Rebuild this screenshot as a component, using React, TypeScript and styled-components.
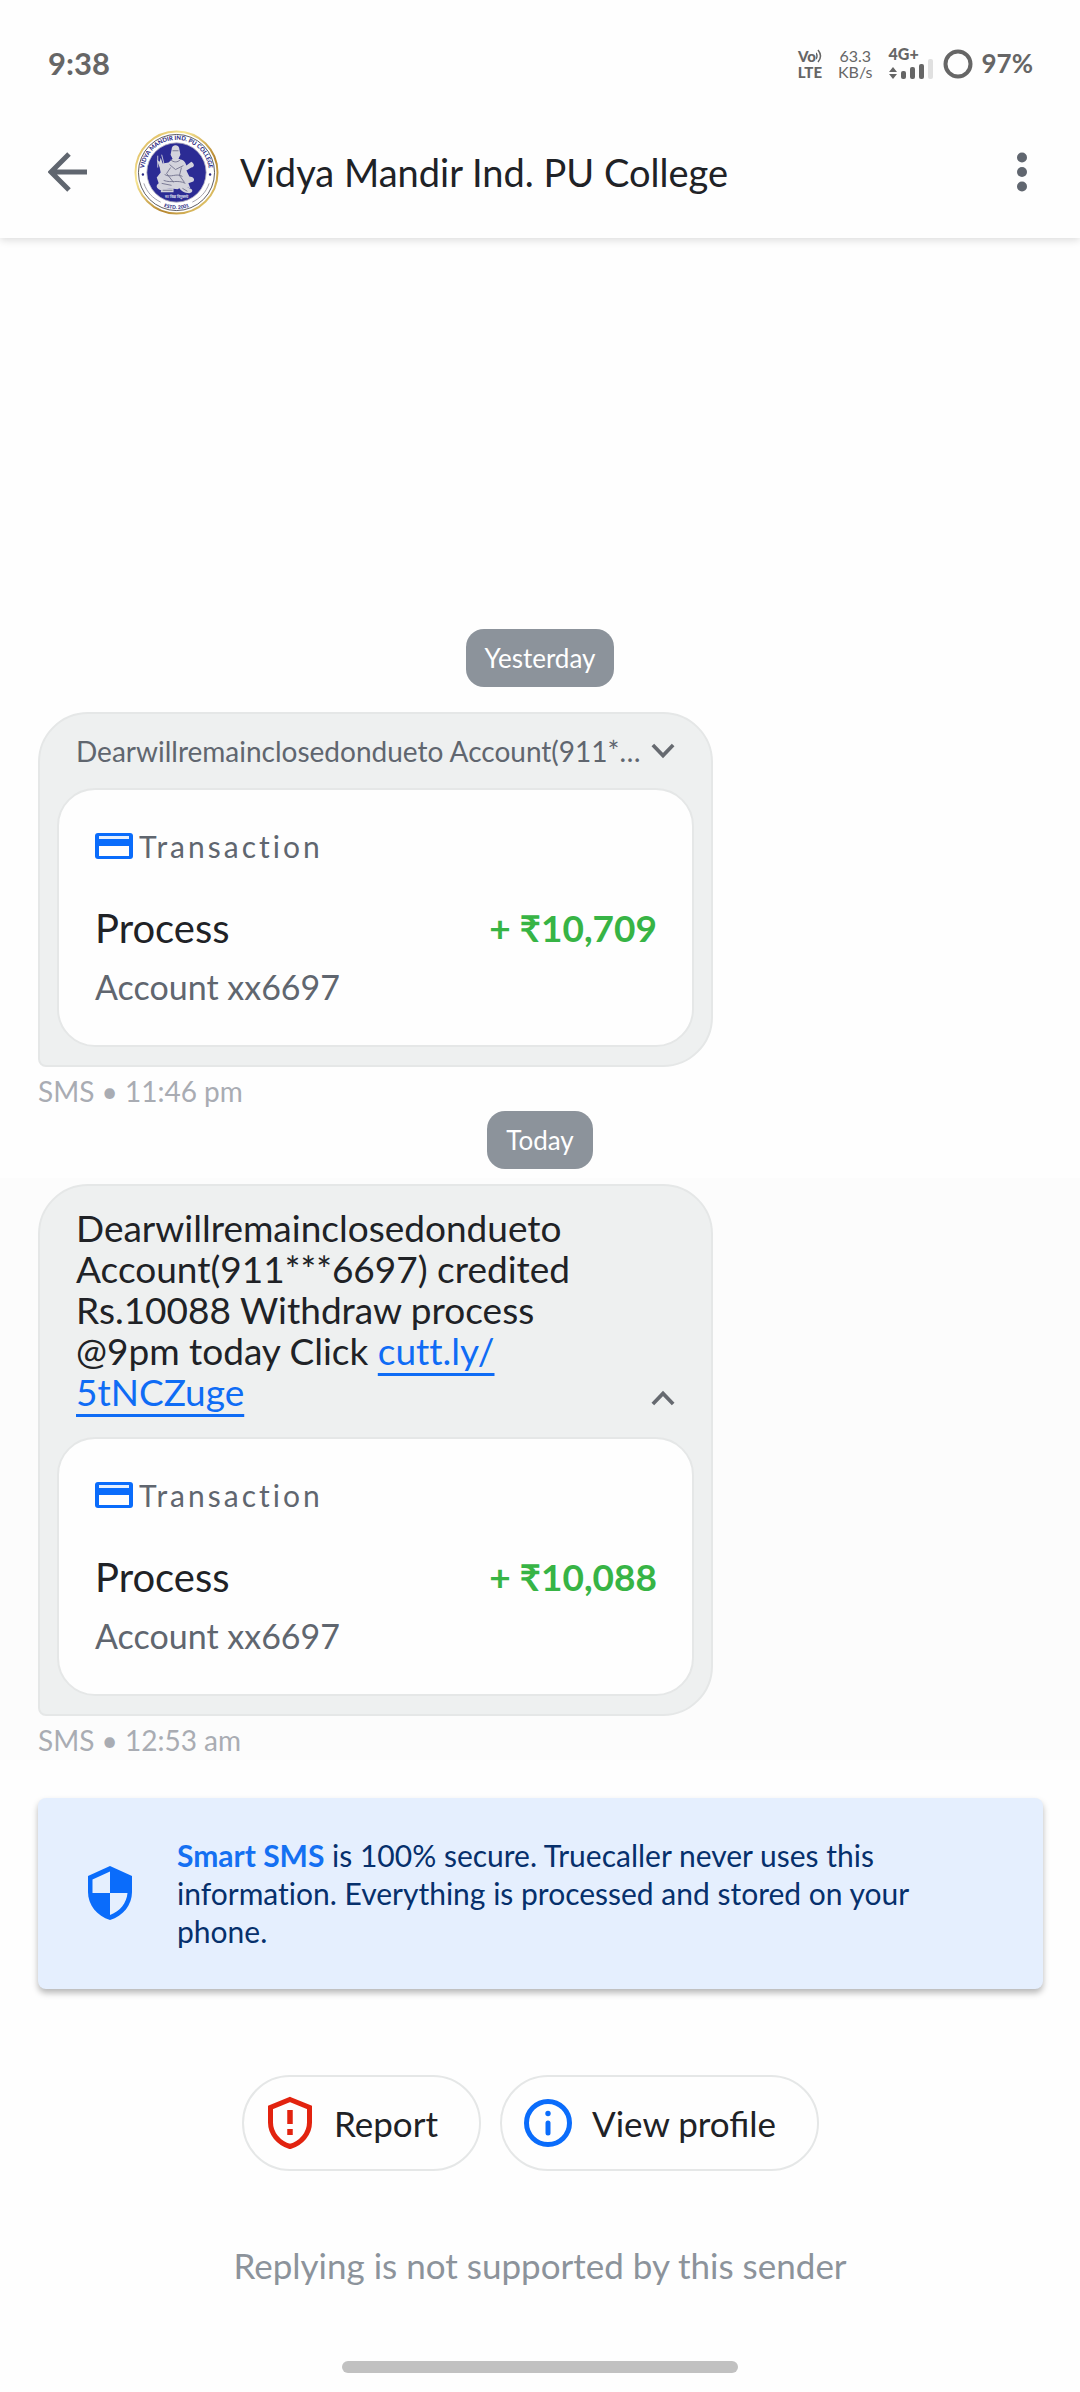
import React, { useState } from "react";
import styled, { createGlobalStyle } from "styled-components";

const GlobalStyle = createGlobalStyle`
  * { box-sizing: border-box; }
  body {
    margin: 0;
    background: #fefefe;
    font-family: Lato, "Open Sans", sans-serif;
    font-variant-ligatures: none;
    color: #202226;
  }
  button { font-family: inherit; color: inherit; background: none; border: 0; padding: 0; cursor: pointer; }
  p, h1, h2 { margin: 0; font-weight: 400; }
  svg { display: block; flex: none; }
`;

const Screen = styled.div`
  display: flex;
  flex-direction: column;
  min-height: 100vh;
  background: #fefefe;
`;

const Header = styled.header`
  padding: 40px 47px 22px 48px;
  box-shadow: 0 2px 8px rgba(0, 0, 0, 0.14);
`;

const StatusBar = styled.div`
  display: flex;
  align-items: center;
  justify-content: space-between;
  height: 48px;
  color: #666;
`;

const Clock = styled.span`
  font-size: 31px;
  line-height: 44px;
  padding-bottom: 2px;
  font-weight: 700;
`;

const StatusIcons = styled.div`
  display: flex;
  align-items: center;
`;

const Stack = styled.div<{ $bold?: boolean }>`
  display: flex;
  flex-direction: column;
  align-items: center;
  margin-right: 16px;
  font-size: ${(p) => (p.$bold ? "15px" : "16px")};
  line-height: 16px;
  font-weight: ${(p) => (p.$bold ? 900 : 400)};
`;

const VoRow = styled.span`
  display: flex;
  align-items: center;
`;

const Network = styled.div`
  display: flex;
  flex-direction: column;
  margin-right: 10px;
  font-size: 16px;
  line-height: 10px;
  font-weight: 900;
`;

const Battery = styled.span`
  margin-left: 9px;
  font-size: 26px;
  line-height: 44px;
  padding-bottom: 2px;
  font-weight: 700;
`;

const TitleBar = styled.div`
  display: flex;
  align-items: center;
  height: 128px;
  padding-top: 40px;
`;

const IconButton = styled.button<{ $end?: boolean }>`
  display: flex;
  align-items: center;
  height: 48px;
  margin-left: ${(p) => (p.$end ? "auto" : "0")};
`;

const Avatar = styled.div`
  margin: 0 21px 0 46px;
`;

const Title = styled.h1`
  font-size: 38px;
  line-height: 48px;
`;

const Thread = styled.main`
  flex: 1;
  display: flex;
  flex-direction: column;
  justify-content: flex-end;
`;

const DayChip = styled.span`
  align-self: center;
  padding: 0 19px;
  border-radius: 18px;
  background: #8c939b;
  color: #fff;
  font-size: 26px;
  line-height: 58px;
`;

const Entry = styled.article<{ $latest?: boolean }>`
  margin-top: ${(p) => (p.$latest ? "9px" : "19px")};
  padding: 6px 38px 0;
  background: ${(p) => (p.$latest ? "#fcfcfc" : "transparent")};
`;

const Bubble = styled.div`
  width: 100%;
  max-width: 675px;
  padding: 0 17px 18px;
  border: 2px solid #e5e7e7;
  border-radius: 50px 50px 50px 8px;
  background: #eef0f0;
`;

const Preview = styled.div`
  display: flex;
  align-items: center;
  justify-content: space-between;
  gap: 8px;
  height: 74px;
  padding: 0 19px;
  color: #60666f;
`;

const PreviewText = styled.p`
  overflow: hidden;
  text-overflow: ellipsis;
  white-space: nowrap;
  font-size: 28px;
  line-height: 40px;
`;

const FullMessage = styled.div`
  display: flex;
  align-items: flex-end;
  justify-content: space-between;
  padding: 21px 19px 25px;
`;

const MessageText = styled.p`
  font-size: 37px;
  line-height: 41px;
`;

const MessageLink = styled.a`
  color: #0f6cf5;
  text-decoration: underline;
  text-decoration-thickness: 3px;
  text-underline-offset: 8px;
  text-decoration-skip-ink: none;
`;

const Toggle = styled.button`
  display: flex;
  align-items: center;
  justify-content: center;
  height: 28px;
`;

const Card = styled.section`
  padding: 39px 35px 38px 36px;
  border: 2px solid #e5e7e7;
  border-radius: 38px;
  background: #fefefe;
`;

const CardKind = styled.div`
  display: flex;
  align-items: center;
  gap: 6px;
  margin-bottom: 43px;
  font-size: 30px;
  line-height: 34px;
  letter-spacing: 3px;
  color: #60666f;
`;

const CardRow = styled.div`
  display: flex;
  align-items: center;
  justify-content: space-between;
  line-height: 44px;
`;

const CardTitle = styled.h2`
  font-size: 40px;
`;

const Amount = styled.strong`
  font-size: 37px;
  font-weight: 700;
  color: #37b445;
`;

const Account = styled.p`
  margin-top: 17px;
  font-size: 34px;
  line-height: 40px;
  color: #60666f;
`;

const Meta = styled.p`
  padding-top: 4px;
  font-size: 28px;
  line-height: 40px;
  color: #a9acb3;
`;

const Banner = styled.aside`
  display: flex;
  align-items: center;
  gap: 45px;
  margin: 38px 37px 0 38px;
  padding: 38px 50px 39px;
  border-radius: 8px;
  background: #e5effe;
  box-shadow: 0 4px 6px rgba(0, 0, 0, 0.28);
  color: #06306c;
  font-size: 30px;
  line-height: 38px;
`;

const Brand = styled.strong`
  font-weight: 700;
  color: #1470f2;
`;

const Actions = styled.div`
  display: flex;
  justify-content: center;
  gap: 19px;
  margin: 86px 19px 70px 0;
`;

const Pill = styled.button`
  display: flex;
  align-items: center;
  gap: 20px;
  height: 96px;
  padding: 0 41px 0 22px;
  border: 2px solid #e5e7e7;
  border-radius: 48px;
  font-size: 35px;
`;

const Notice = styled.p`
  text-align: center;
  font-size: 35px;
  line-height: 48px;
  color: #8c939b;
`;

const HomeBar = styled.div`
  align-self: center;
  width: 37%;
  max-width: 396px;
  height: 12px;
  margin: 72px 0 19px;
  border-radius: 6px;
  background: #c1c1c1;
`;

const Chevron = ({ up }: { up?: boolean }) => (
  <svg width="24" height="18" viewBox="0 0 26 18" fill="none" stroke="#666a70" strokeWidth="4">
    <path d={up ? "M2 15.500 13 4l11 11.500" : "M2 2.500 13 14 24 2.500"} />
  </svg>
);

const Crest = () => (
  <svg width="85" height="85" viewBox="0 0 86 86" role="img" aria-label="College crest">
    <defs>
      <linearGradient id="gold" x1="0" y1="0" x2="1" y2="1">
        <stop offset="0" stopColor="#cfa347" />
        <stop offset="0.3" stopColor="#f8e795" />
        <stop offset="0.65" stopColor="#b5842c" />
        <stop offset="1" stopColor="#f6e58a" />
      </linearGradient>
      <path id="crestTop" d="M10 43a33 33 0 0 1 66 0" />
      <path id="crestBottom" d="M6 43a37 37 0 0 0 74 0" />
    </defs>
    <circle cx="43" cy="43" r="41.500" fill="#fff" stroke="url(#gold)" strokeWidth="2" />
    <circle cx="43" cy="43" r="38.500" fill="none" stroke="#35343c" strokeWidth="0.800" />
    <circle cx="43" cy="43" r="30" fill="#2b2b94" stroke="#b9b6c4" strokeWidth="0.800" />
    <g fill="#2b2b84" fontSize="6" fontWeight="900" textAnchor="middle">
      <text><textPath href="#crestTop" startOffset="50%">VIDYA MANDIR IND. PU COLLEGE</textPath></text>
      <text fontSize="5"><textPath href="#crestBottom" startOffset="50%">ESTD. 2001</textPath></text>
    </g>
    <path d="M10 54c3 9 9 15 17 19M76 54c-3 9-9 15-17 19" fill="none" stroke="#8b8996" strokeWidth="0.800" />
    <g fill="#2b2b84"><circle cx="9" cy="45" r="1.200" /><circle cx="77" cy="45" r="1.200" /></g>
    <g fill="#d3d3dc">
      <path d="M38 20c0-6 8-6 8 0l1 5-2 4c5 1 7 3 8 7l5-4c3 2 4 5 0 6l-5 3 3 6c4 0 6 3 4 5l-5 2 2 5-7-2-6 3-8-1-9 2c-5-2-5-5-2-7l-2-6 4-5-1-5-3-8 3 2 1-4 2 6 6-1 4-4-2-4z" />
      <path d="M45 57c3-3 8 0 11 2 4 1 4 4 0 5-5 0-9-2-11-7zM28 59h12v4H27z" />
    </g>
    <g fill="none" stroke="#70708c" strokeWidth="0.900">
      <path d="M39 21h6M37 30c3 3 7 3 10 0M36 35l6 5 8-4M31 45c6 4 12-2 18 2M30 51c8 3 14-1 22 3M37 38l-4 6 7 9M48 38l-2 8 5 7M28 54l10 2M29 61h10M49 59l5 3" />
      <path d="M24 26v12M28 25l3 12" stroke="#d3d3dc" />
    </g>
    <text x="43" y="69" textAnchor="middle" fontSize="4" fontWeight="700" fill="#dfdfea">सा विद्या विमुक्तये</text>
  </svg>
);

const Signal = () => (
  <svg width="44" height="20" viewBox="0 0 44 20" fill="#666">
    <path d="M0 13l4-5 4 5zM0 15l4 5 4-5z" />
    <rect x="12" y="12" width="5" height="8" rx="2" />
    <rect x="21" y="8" width="5" height="12" rx="2" />
    <rect x="30" y="5" width="5" height="15" rx="2" />
    <rect x="39" y="0" width="5" height="20" rx="2" fill="#e0e0e0" />
  </svg>
);

const CardIcon = () => (
  <svg width="38" height="26" viewBox="0 0 38 26">
    <rect width="38" height="26" rx="3" fill="#0a6cfb" />
    <path d="M4 3h30v3H4z" fill="#e5effe" />
    <path d="M4 13h30v10H4z" fill="#fefefe" />
  </svg>
);

const SecureShield = () => (
  <svg width="44" height="54" viewBox="0 0 44 54">
    <path d="M22 0 44 10v16c0 13-9 24-22 28C9 50 0 39 0 26V10z" fill="#0a6cfb" />
    <path d="M22 5.500V27H4.500V13.500zM22 27h17.500c-1 10-7 18-17.500 22z" fill="#e5effe" />
  </svg>
);

const AlertShield = () => (
  <svg width="48" height="54" viewBox="0 0 48 54" fill="none" stroke="#e2230f" strokeWidth="5">
    <path d="M24 3.500 43.500 11.500v15c0 11-8 20.500-19.500 24C12.500 47 4.500 37.500 4.500 26.500v-15z" />
    <path d="M24 14v14M24 33v6" strokeWidth="5.500" />
  </svg>
);

const InfoIcon = () => (
  <svg width="48" height="48" viewBox="0 0 48 48" fill="none" stroke="#0a6cfb" strokeWidth="5">
    <circle cx="24" cy="24" r="21.500" />
    <path d="M24 24v10" strokeLinecap="round" />
    <circle cx="24" cy="14.500" r="2.700" fill="#0a6cfb" stroke="none" />
  </svg>
);

const Transaction = ({ amount }: { amount: string }) => (
  <Card>
    <CardKind>
      <CardIcon />
      <span>Transaction</span>
    </CardKind>
    <CardRow>
      <CardTitle>Process</CardTitle>
      <Amount>{amount}</Amount>
    </CardRow>
    <Account>Account xx6697</Account>
  </Card>
);

type MessageProps = {
  preview: string;
  amount: string;
  time: string;
  latest?: boolean;
  children: React.ReactNode;
};

const Message = ({ preview, amount, time, latest, children }: MessageProps) => {
  const [open, setOpen] = useState(Boolean(latest));
  const toggle = (
    <Toggle aria-label={open ? "Collapse message" : "Expand message"} onClick={() => setOpen(!open)}>
      <Chevron up={open} />
    </Toggle>
  );
  return (
    <Entry $latest={latest}>
      <Bubble>
        {open ? (
          <FullMessage>
            <MessageText>{children}</MessageText>
            {toggle}
          </FullMessage>
        ) : (
          <Preview>
            <PreviewText>{preview}</PreviewText>
            {toggle}
          </Preview>
        )}
        <Transaction amount={amount} />
      </Bubble>
      <Meta>SMS • {time}</Meta>
    </Entry>
  );
};

export default function App() {
  return (
    <Screen>
      <GlobalStyle />
      <Header>
        <StatusBar>
          <Clock>9:38</Clock>
          <StatusIcons>
            <Stack $bold>
              <VoRow>
                Vo
                <svg width="6" height="14" viewBox="0 0 6 14" fill="none" stroke="#666" strokeWidth="1.500">
                  <path d="M0 4q2 3 0 6M2 1q5 6 0 12" />
                </svg>
              </VoRow>
              <span>LTE</span>
            </Stack>
            <Stack>
              <span>63.3</span>
              <span>KB/s</span>
            </Stack>
            <Network>
              <span>4G+</span>
              <Signal />
            </Network>
            <svg width="30" height="30" viewBox="0 0 30 30" fill="none" stroke="#666" strokeWidth="4">
              <circle cx="15" cy="15" r="12.500" />
            </svg>
            <Battery>97%</Battery>
          </StatusIcons>
        </StatusBar>
        <TitleBar>
          <IconButton aria-label="Back">
            <svg width="40" height="40" viewBox="0 0 40 40" fill="none" stroke="#60666f" strokeWidth="5">
              <path d="M39 20H4M21 2 3 20l18 18" />
            </svg>
          </IconButton>
          <Avatar>
            <Crest />
          </Avatar>
          <Title>Vidya Mandir Ind. PU College</Title>
          <IconButton aria-label="More options" $end>
            <svg width="22" height="40" viewBox="0 0 22 40" fill="#60666f">
              <circle cx="11" cy="5.500" r="5" />
              <circle cx="11" cy="20" r="5" />
              <circle cx="11" cy="34.500" r="5" />
            </svg>
          </IconButton>
        </TitleBar>
      </Header>

      <Thread>
        <DayChip>Yesterday</DayChip>
        <Message
          preview="Dearwillremainclosedondueto Account(911*…"
          amount="+ ₹10,709"
          time="11:46 pm"
        >
          Dearwillremainclosedondueto
          <br />
          Account(911*…
        </Message>
        <DayChip>Today</DayChip>
        <Message
          latest
          preview="Dearwillremainclosedondueto Account(911***6697)"
          amount="+ ₹10,088"
          time="12:53 am"
        >
          Dearwillremainclosedondueto
          <br />
          Account(911***6697) credited
          <br />
          Rs.10088 Withdraw process
          <br />
          @9pm today Click{" "}
          <MessageLink href="#message-link">
            cutt.ly/
            <br />
            5tNCZuge
          </MessageLink>
        </Message>
      </Thread>

      <Banner>
        <SecureShield />
        <p>
          <Brand>Smart SMS</Brand> is 100% secure. Truecaller never uses this
          <br />
          information. Everything is processed and stored on your
          <br />
          phone.
        </p>
      </Banner>

      <Actions>
        <Pill>
          <AlertShield />
          Report
        </Pill>
        <Pill>
          <InfoIcon />
          View profile
        </Pill>
      </Actions>
      <Notice>Replying is not supported by this sender</Notice>
      <HomeBar />
    </Screen>
  );
}
